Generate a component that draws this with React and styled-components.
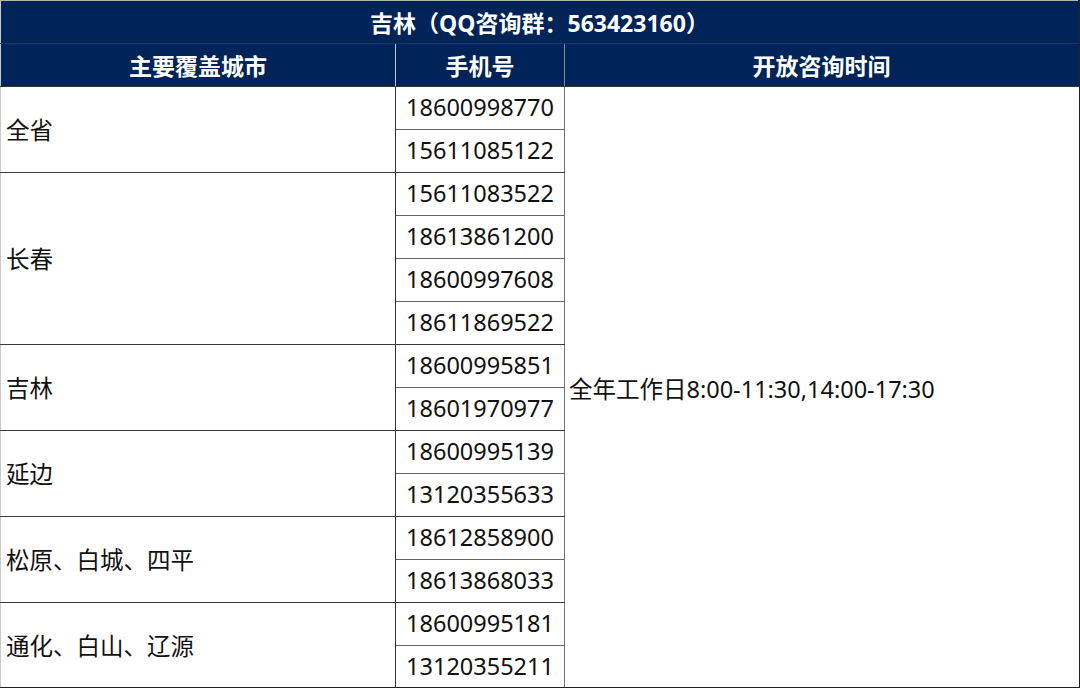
import React from 'react';
import styled, { createGlobalStyle } from 'styled-components';

const GlobalStyle = createGlobalStyle`
  html, body {
    margin: 0;
    padding: 0;
    background: #fff;
  }
  body {
    font-family: "Noto Sans", "Noto Sans CJK SC", sans-serif;
  }
`;

const Frame = styled.div`
  width: 1080px;
  height: 688px;
  box-sizing: border-box;
  overflow: hidden;
  border-right: 1px solid #222;
  border-bottom: 1px solid #222;
`;

const Table = styled.table`
  width: 1079px;
  table-layout: fixed;
  border-collapse: collapse;
  color: #111;
  font-size: 23.5px;
`;

const HeadRow = styled.tr`
  height: 43px;
  background: #002458;
`;

const Th = styled.th`
  padding: 0;
  color: #fff;
  font-weight: 700;
  font-size: 23px;
  text-align: center;
  border-top: 1px solid ${(p) => (p.$top ? '#b4b4b4' : '#b4c6e7')};
  border-left: 1px solid ${(p) => p.$left || '#002458'};
  border-right: 1px solid ${(p) => p.$right || '#002458'};
  border-bottom: 1px solid #333;
`;

const BodyRow = styled.tr`
  height: 43px;
`;

const CityCell = styled.td`
  padding: 0 0 2px 5px;
  text-align: left;
  vertical-align: middle;
  border-left: 1px solid #c8c8c8;
  border-right: 1px solid #333;
  border-bottom: 1px solid #3a3a3a;
`;

const PhoneCell = styled.td`
  padding: 0 0 2px;
  text-align: center;
  vertical-align: middle;
  border-right: 1px solid #777;
  border-bottom: 1px solid ${(p) => (p.$last ? '#3a3a3a' : '#666')};
`;

const TimeCell = styled.td`
  padding: 0 0 0 4px;
  text-align: left;
  vertical-align: middle;
`;

const groups = [
  { city: '全省', phones: ['18600998770', '15611085122'] },
  { city: '长春', phones: ['15611083522', '18613861200', '18600997608', '18611869522'] },
  { city: '吉林', phones: ['18600995851', '18601970977'] },
  { city: '延边', phones: ['18600995139', '13120355633'] },
  { city: '松原、白城、四平', phones: ['18612858900', '18613868033'] },
  { city: '通化、白山、辽源', phones: ['18600995181', '13120355211'] },
];

const totalRows = groups.reduce((n, g) => n + g.phones.length, 0);

export default function App() {
  let first = true;
  return (
    <>
      <GlobalStyle />
      <Frame>
        <Table>
          <colgroup>
            <col style={{ width: 395 }} />
            <col style={{ width: 169 }} />
            <col />
          </colgroup>
          <thead>
            <HeadRow>
              <Th colSpan={3} $top $left="#c8c8c8">
                吉林（QQ咨询群：563423160）
              </Th>
            </HeadRow>
            <HeadRow>
              <Th $left="#c8c8c8" $right="#b4c6e7">主要覆盖城市</Th>
              <Th $right="#7f8aa0">手机号</Th>
              <Th>开放咨询时间</Th>
            </HeadRow>
          </thead>
          <tbody>
            {groups.map((g) =>
              g.phones.map((phone, i) => {
                const showTime = first;
                first = false;
                return (
                  <BodyRow key={phone}>
                    {i === 0 && <CityCell rowSpan={g.phones.length}>{g.city}</CityCell>}
                    <PhoneCell $last={i === g.phones.length - 1}>{phone}</PhoneCell>
                    {showTime && (
                      <TimeCell rowSpan={totalRows}>全年工作日8:00-11:30,14:00-17:30</TimeCell>
                    )}
                  </BodyRow>
                );
              })
            )}
          </tbody>
        </Table>
      </Frame>
    </>
  );
}
